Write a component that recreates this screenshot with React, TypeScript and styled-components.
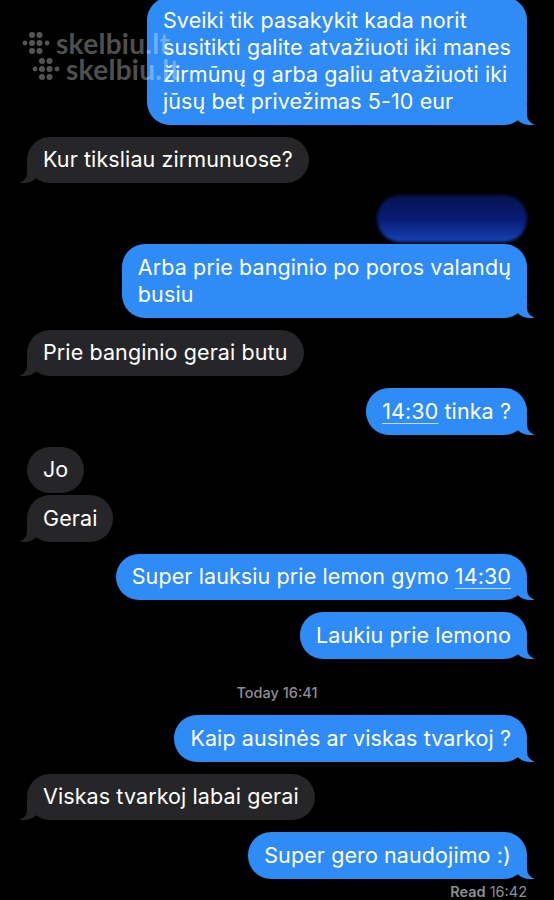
import React from 'react'
import styled, { createGlobalStyle, css } from 'styled-components'

const GlobalStyle = createGlobalStyle`
  html, body {
    margin: 0;
    padding: 0;
    background: #000;
  }
`

type Side = 'me' | 'them'

const BLUE = '#2f8bf5'
const GRAY = '#262629'

const Screen = styled.div`
  position: relative;
  width: 554px;
  height: 900px;
  overflow: hidden;
  background: #000;
  font-family: Inter, 'Noto Sans', sans-serif;
  -webkit-font-smoothing: antialiased;
`

const Thread = styled.div`
  display: flex;
  flex-direction: column;
  padding: 0 27px;
  margin-top: -3px;
`

const Row = styled.div<{ $from: Side; $gap: number }>`
  display: flex;
  justify-content: ${p => (p.$from === 'me' ? 'flex-end' : 'flex-start')};
  margin-top: ${p => p.$gap}px;
`

const tailMe = css`
  &::before {
    content: '';
    position: absolute;
    bottom: 0;
    right: -7px;
    width: 20px;
    height: 20px;
    background: ${BLUE};
    border-bottom-left-radius: 16px 14px;
  }
  &::after {
    content: '';
    position: absolute;
    bottom: 0;
    right: -10px;
    width: 10px;
    height: 20px;
    background: #000;
    border-bottom-left-radius: 10px;
  }
`

const tailThem = css`
  &::before {
    content: '';
    position: absolute;
    bottom: 0;
    left: -7px;
    width: 20px;
    height: 20px;
    background: ${GRAY};
    border-bottom-right-radius: 16px 14px;
  }
  &::after {
    content: '';
    position: absolute;
    bottom: 0;
    left: -10px;
    width: 10px;
    height: 20px;
    background: #000;
    border-bottom-right-radius: 10px;
  }
`

const Bubble = styled.div<{ $from: Side; $tail?: boolean }>`
  position: relative;
  padding: 9.75px 16px;
  border-radius: 23px;
  background: ${p => (p.$from === 'me' ? BLUE : GRAY)};
  color: #fff;
  font-size: 21.5px;
  line-height: 27px;
  letter-spacing: 0.1px;
  white-space: pre;
  z-index: 0;
  ${p => p.$tail && (p.$from === 'me' ? tailMe : tailThem)}
  & > span {
    position: relative;
    z-index: 2;
  }
`

const Hidden = styled.div`
  width: 150px;
  height: 47px;
  border-radius: 23px;
  background: linear-gradient(180deg, #06124e 0%, #081d78 55%, #1544b4 100%);
  filter: blur(1.5px);
`

const Link = styled.span`
  text-decoration: underline;
  text-decoration-color: rgba(255, 255, 255, 0.7);
  text-decoration-thickness: 1px;
  text-underline-offset: 4px;
`

const Stamp = styled.div<{ $gap: number }>`
  margin-top: ${p => p.$gap}px;
  text-align: center;
  color: #8e8e93;
  font-size: 14.5px;
  font-weight: 500;
  line-height: 16px;
`

const Receipt = styled.div`
  margin-top: 5.5px;
  text-align: right;
  color: #8e8e93;
  font-size: 14.5px;
  line-height: 16px;
  b {
    font-weight: 600;
  }
`

const Watermark = styled.div<{ $x: number; $y: number }>`
  position: absolute;
  left: ${p => p.$x}px;
  top: ${p => p.$y}px;
  display: flex;
  align-items: center;
  gap: 6px;
  color: rgba(255, 255, 255, 0.33);
  font-family: Lato, 'Open Sans', sans-serif;
  font-weight: 700;
  font-size: 28px;
  line-height: 28px;
  letter-spacing: 0.3px;
  pointer-events: none;
  z-index: 5;
`

const DotMark = () => {
  const dots: [number, number, number][] = [
    [10, 3, 3],
    [17.5, 3, 3],
    [3, 11, 2.4],
    [10, 11, 3],
    [17.5, 11, 3],
    [25, 11, 2.4],
    [10, 19, 3],
    [17.5, 19, 3],
  ]
  return (
    <svg width="28" height="22" viewBox="0 0 28 22">
      {dots.map(([cx, cy, r], i) => (
        <circle key={i} cx={cx} cy={cy} r={r} fill="rgba(255,255,255,0.33)" />
      ))}
    </svg>
  )
}

type Msg = {
  from: Side
  gap: number
  tail?: boolean
  text?: React.ReactNode
  hidden?: boolean
}

const messages: Msg[] = [
  {
    from: 'me',
    gap: 0,
    tail: true,
    text: 'Sveiki tik pasakykit kada norit\nsusitikti galite atvažiuoti iki manes\nžirmūnų g arba galiu atvažiuoti iki\njūsų bet privežimas 5-10 eur',
  },
  { from: 'them', gap: 12, tail: true, text: 'Kur tiksliau zirmunuose?' },
  { from: 'me', gap: 12, hidden: true },
  { from: 'me', gap: 2, tail: true, text: 'Arba prie banginio po poros valandų\nbusiu' },
  { from: 'them', gap: 12, tail: true, text: 'Prie banginio gerai butu' },
  {
    from: 'me',
    gap: 12,
    tail: true,
    text: (
      <>
        <Link>14:30</Link> tinka ?
      </>
    ),
  },
  { from: 'them', gap: 12, text: 'Jo' },
  { from: 'them', gap: 2, tail: true, text: 'Gerai' },
  {
    from: 'me',
    gap: 12,
    tail: true,
    text: (
      <>
        Super lauksiu prie lemon gymo <Link>14:30</Link>
      </>
    ),
  },
  { from: 'me', gap: 12, tail: true, text: 'Laukiu prie lemono' },
]

const later: Msg[] = [
  { from: 'me', gap: 14, tail: true, text: 'Kaip ausinės ar viskas tvarkoj ?' },
  { from: 'them', gap: 12, tail: true, text: 'Viskas tvarkoj labai gerai' },
  { from: 'me', gap: 12, tail: true, text: 'Super gero naudojimo :)' },
]

const renderMsg = (m: Msg, i: number) => (
  <Row key={i} $from={m.from} $gap={m.gap}>
    {m.hidden ? (
      <Hidden />
    ) : (
      <Bubble $from={m.from} $tail={m.tail}>
        <span>{m.text}</span>
      </Bubble>
    )}
  </Row>
)

export default function App() {
  return (
    <Screen>
      <GlobalStyle />
      <Thread>
        {messages.map(renderMsg)}
        <Stamp $gap={26.5}>Today 16:41</Stamp>
        {later.map(renderMsg)}
        <Receipt>
          <b>Read</b> 16:42
        </Receipt>
      </Thread>
      <Watermark $x={22} $y={29}>
        <DotMark />
        <span>skelbiu.lt</span>
      </Watermark>
      <Watermark $x={32} $y={55}>
        <DotMark />
        <span>skelbiu.lt</span>
      </Watermark>
    </Screen>
  )
}
